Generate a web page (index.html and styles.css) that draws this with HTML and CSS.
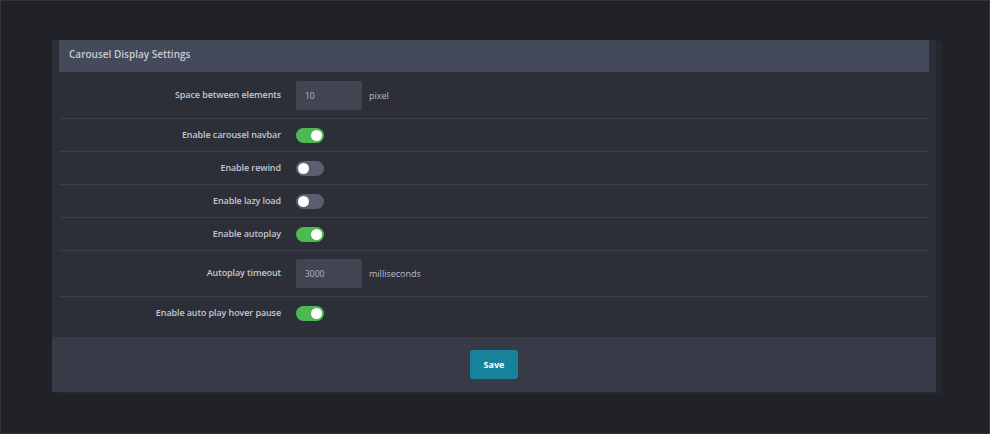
FILE: index.html
```html
<!DOCTYPE html>
<html lang="en">
<head>
    <meta charset="UTF-8">
    <meta name="viewport" content="width=device-width, initial-scale=1.0">
    <title>Carousel Display Settings</title>
    <link rel="stylesheet" href="styles.css">
</head>
<body>
<div class="page">
    <div class="panel">
        <div class="panel-body">
            <div class="panel-heading">Carousel Display Settings</div>

            <div class="form-row tall">
                <label class="form-label" for="space">Space between elements</label>
                <div class="form-field">
                    <input class="text-input" id="space" type="text" value="10">
                    <span class="unit">pixel</span>
                </div>
            </div>

            <div class="form-row">
                <label class="form-label">Enable carousel navbar</label>
                <div class="form-field"><span class="switch on"></span></div>
            </div>

            <div class="form-row">
                <label class="form-label">Enable rewind</label>
                <div class="form-field"><span class="switch"></span></div>
            </div>

            <div class="form-row">
                <label class="form-label">Enable lazy load</label>
                <div class="form-field"><span class="switch"></span></div>
            </div>

            <div class="form-row">
                <label class="form-label">Enable autoplay</label>
                <div class="form-field"><span class="switch on"></span></div>
            </div>

            <div class="form-row tall">
                <label class="form-label" for="timeout">Autoplay timeout</label>
                <div class="form-field">
                    <input class="text-input" id="timeout" type="text" value="3000">
                    <span class="unit">milliseconds</span>
                </div>
            </div>

            <div class="form-row last">
                <label class="form-label">Enable auto play hover pause</label>
                <div class="form-field"><span class="switch on"></span></div>
            </div>
        </div>

        <div class="panel-footer">
            <button class="btn-save" type="button">Save</button>
        </div>
    </div>
</div>
</body>
</html>
```

FILE: styles.css
```css
html, body {
    margin: 0;
    height: 100%;
}
body {
    background-color: #212227;
    font-family: "Open Sans", "Liberation Sans", sans-serif;
    color: #c7cad2;
}
.page {
    box-sizing: border-box;
    height: 100%;
    border: 1px solid #34353a;
    padding: 39px 53px 0 51px;
}
.panel {
    background-color: #2c2f38;
    box-shadow: 6px 2px 0 #25272d;
}
.panel-body {
    padding: 0 7px;
}
.panel-heading {
    height: 32px;
    line-height: 29px;
    margin-bottom: 1px;
    padding-left: 10px;
    background-color: #444a59;
    color: #c9ccd5;
    font-size: 10px;
    font-weight: 600;
}
.form-row {
    display: grid;
    grid-template-columns: 222px 1fr;
    column-gap: 15px;
    align-items: center;
    height: 32px;
    border-bottom: 1px solid #3b3f4a;
}
.form-row.tall {
    height: 45px;
}
.form-row.last {
    border-bottom: none;
    height: 33px;
    padding-bottom: 7px;
}
.form-label {
    padding-bottom: 2px;
    text-align: right;
    font-size: 9px;
    font-weight: 600;
    letter-spacing: -0.1px;
    color: #c4c7cf;
}
.form-field {
    display: flex;
    align-items: center;
    gap: 7px;
}
.text-input {
    box-sizing: border-box;
    width: 66px;
    height: 29px;
    padding: 0 9px;
    border: none;
    border-radius: 2px;
    background-color: #414552;
    color: #b3b7c1;
    font-family: inherit;
    font-size: 8.5px;
    outline: none;
}
.unit {
    font-size: 9px;
    color: #b8bcc6;
}
.switch {
    position: relative;
    display: inline-block;
    width: 28px;
    height: 15px;
    border-radius: 8px;
    background-color: #5b6070;
}
.switch::after {
    content: "";
    position: absolute;
    top: 2px;
    left: 2px;
    width: 11px;
    height: 11px;
    border-radius: 50%;
    background-color: #ffffff;
}
.switch.on {
    background-color: #4cb953;
}
.switch.on::after {
    left: 15px;
}
.panel-footer {
    display: flex;
    justify-content: center;
    align-items: center;
    height: 55px;
    background-color: #383b47;
}
.btn-save {
    width: 48px;
    height: 29px;
    border: none;
    border-radius: 3px;
    background-color: #16839b;
    color: #ffffff;
    font-family: inherit;
    font-size: 9px;
    font-weight: 700;
}
```
